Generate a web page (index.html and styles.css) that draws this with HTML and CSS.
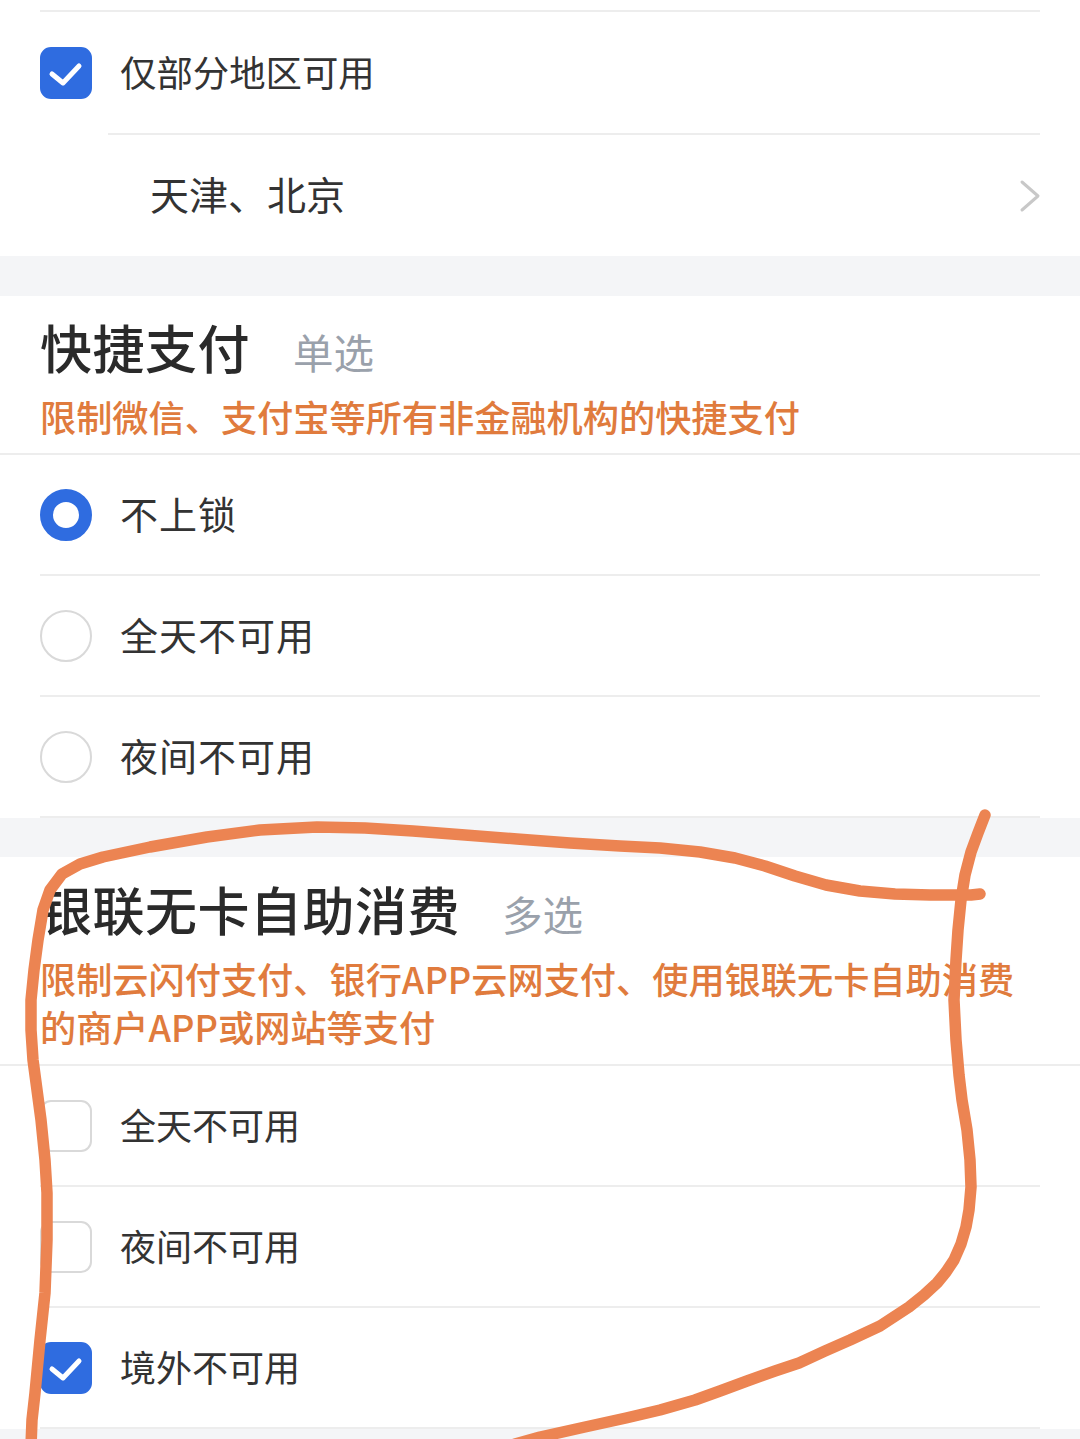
FILE: index.html
```html
<!DOCTYPE html>
<html lang="zh-CN">
<head>
<meta charset="utf-8">
<title>支付限制设置</title>
<link rel="stylesheet" href="styles.css">
</head>
<body>
<div class="page">
  <section class="card">
    <div class="stub"></div>
    <div class="row">
      <span class="checkbox on">
        <svg viewBox="0 0 52 52" class="tick"><path d="M12 27 L23 36 L39 19"/></svg>
      </span>
      <span class="label">仅部分地区可用</span>
    </div>
    <div class="row region-row">
      <span class="region">天津、北京</span>
      <svg class="chevron" viewBox="0 0 22 34"><path d="M3 3 L19 17 L3 31"/></svg>
    </div>
  </section>

  <div class="gap"></div>

  <section class="card">
    <header class="sec-head">
      <div class="title-line">
        <h2 class="title">快捷支付</h2>
        <span class="mode">单选</span>
      </div>
      <p class="desc">限制微信、支付宝等所有非金融机构的快捷支付</p>
    </header>
    <ul class="options radios">
      <li class="option"><span class="radio on"></span><span class="label">不上锁</span></li>
      <li class="option"><span class="radio"></span><span class="label">全天不可用</span></li>
      <li class="option"><span class="radio"></span><span class="label">夜间不可用</span></li>
    </ul>
  </section>

  <div class="gap gap-2"></div>

  <section class="card">
    <header class="sec-head sec-head-2">
      <div class="title-line">
        <h2 class="title">银联无卡自助消费</h2>
        <span class="mode mode-2">多选</span>
      </div>
      <p class="desc">限制云闪付支付、银行APP云网支付、使用银联无卡自助消费<br>的商户APP或网站等支付</p>
    </header>
    <ul class="options checks">
      <li class="option"><span class="checkbox"></span><span class="label">全天不可用</span></li>
      <li class="option"><span class="checkbox"></span><span class="label">夜间不可用</span></li>
      <li class="option"><span class="checkbox on"><svg viewBox="0 0 52 52" class="tick"><path d="M12 27 L23 36 L39 19"/></svg></span><span class="label">境外不可用</span></li>
    </ul>
  </section>

  <svg class="annotation" viewBox="0 0 1080 1439">
    <path d="M985 815 L978 833 L971 852 L965 875 L961 900 L958 930 L956 960 L954 1000 L956 1040 L959 1075 L962 1100 L967 1130 L970 1160 L971 1187 L969 1210 L966 1227 L961 1244 L954 1260 L946 1272 L937 1283 L924 1295 L909 1307 L880 1326 L850 1340 L825 1351 L799 1363 L775 1371 L747 1381 L720 1391 L695 1400 L660 1410 L626 1418 L585 1427 L540 1437 L515 1444"/>
    <path d="M980 894 L971 895 L930 895 L895 894 L860 891 L826 885 L795 876 L765 866 L735 858 L700 852 L660 848 L620 846 L570 843 L517 839 L465 835 L413 831 L365 828 L317 827 L260 830 L207 837 L150 847 L103 857 L80 864 L62 874 L50 890 L43 910 L38 940 L34 970 L31 1000 L31 1030 L33 1060 L37 1090 L41 1120 L45 1160 L47 1193 L47 1240 L45 1293 L40 1340 L35 1393 L32 1420 L31 1446"/>
  </svg>
</div>
</body>
</html>
```

FILE: styles.css
```css
* { box-sizing: border-box; }

body {
  margin: 0;
  background: #f4f5f7;
  font-family: "Noto Sans CJK SC", "Noto Sans", sans-serif;
  color: #333333;
}

.page {
  position: relative;
  width: 1080px;
  height: 1439px;
  overflow: hidden;
}

.card { background: #ffffff; }

.stub {
  height: 12px;
  margin: 0 40px;
  border-bottom: 2px solid #ededed;
}

.row {
  height: 121px;
  margin: 0 40px;
  display: flex;
  align-items: center;
}

.region-row {
  height: 123px;
  margin-left: 108px;
  padding-left: 42px;
  border-top: 2px solid #ededed;
  justify-content: space-between;
}

.region {
  margin-bottom: 5px;
  font-size: 39px;
  line-height: 50px;
  color: #333333;
}

.chevron {
  width: 22px;
  height: 34px;
  margin-right: -1px;
  fill: none;
  stroke: #c8c8c8;
  stroke-width: 3;
  stroke-linecap: round;
  stroke-linejoin: round;
}

.label {
  margin-left: 28px;
  margin-bottom: 4px;
  font-size: 36.4px;
  line-height: 48px;
  color: #333333;
}

.checkbox {
  flex: none;
  width: 52px;
  height: 52px;
  border-radius: 11px;
  border: 2px solid #d9d9d9;
  display: flex;
}

.checkbox.on {
  background: #2f6ce0;
  border-color: #2f6ce0;
}

.tick {
  width: 52px;
  height: 52px;
  margin: -2px;
  fill: none;
  stroke: #ffffff;
  stroke-width: 5;
  stroke-linecap: round;
  stroke-linejoin: round;
}

.radio {
  flex: none;
  width: 52px;
  height: 52px;
  border-radius: 50%;
  border: 2px solid #d9d9d9;
}

.radio.on {
  border: 13px solid #2f6ce0;
}

.gap { height: 40px; }
.gap-2 { height: 39px; }

.sec-head {
  padding: 21px 40px 13px;
  border-bottom: 2px solid #ededed;
}

.sec-head-2 { padding-top: 22px; padding-bottom: 14px; }

.title-line {
  display: flex;
  align-items: baseline;
  height: 60px;
}

.title {
  margin: 0;
  font-size: 52px;
  letter-spacing: 0.5px;
  line-height: 60px;
  font-weight: 500;
  color: #2a2a2a;
}

.mode {
  margin-left: 43px;
  font-size: 40.5px;
  line-height: 1;
  color: #9aa1ab;
}

.mode-2 { margin-left: 42px; }

.desc {
  margin: 15px 0 0;
  font-size: 36.2px;
  line-height: 48px;
  font-weight: 500;
  white-space: nowrap;
  color: #e07b3d;
}

.options {
  list-style: none;
  margin: 0;
  padding: 0;
}

.option {
  height: 121px;
  margin: 0 40px;
  display: flex;
  align-items: center;
  border-bottom: 2px solid #ededed;
}

.radios .label {
  font-size: 38px;
  letter-spacing: 1px;
}

.checks .label {
  font-size: 36px;
}

.annotation {
  position: absolute;
  left: 0;
  top: 0;
  width: 1080px;
  height: 1439px;
  pointer-events: none;
  fill: none;
  stroke: #ec8452;
  stroke-width: 11.5;
  stroke-linecap: round;
  stroke-linejoin: round;
}
```
